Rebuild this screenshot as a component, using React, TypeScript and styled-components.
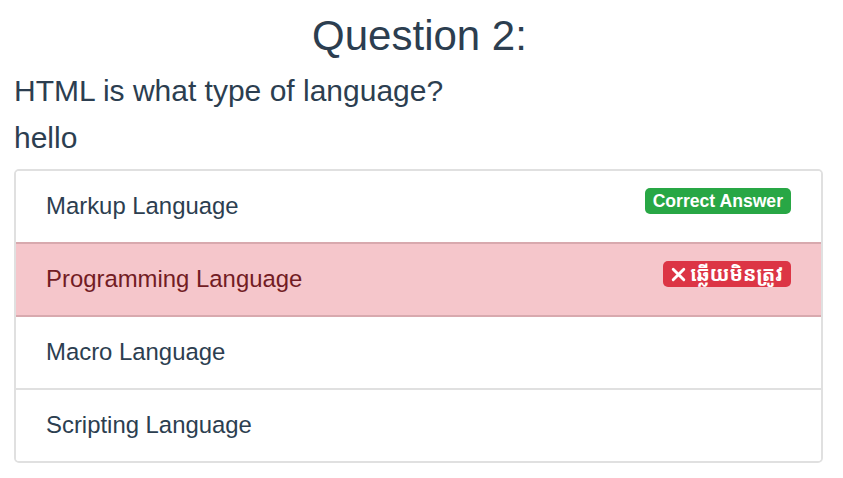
import React from "react";
import styled, { createGlobalStyle } from "styled-components";

const Global = createGlobalStyle`
  html, body { margin: 0; padding: 0; background: #ffffff; }
  body {
    font-family: "Liberation Sans", Arial, "Noto Sans", sans-serif;
    color: #2c3e50;
  }
`;

const Page = styled.div`
  width: 843px;
  box-sizing: border-box;
  padding: 10px 20px 0 14px;
  display: flex;
  flex-direction: column;
`;

const Title = styled.h1`
  margin: 0;
  font-weight: 400;
  font-size: 42px;
  line-height: 52px;
  text-align: center;
  padding-left: 2px;
`;

const Heading = styled.h3`
  margin: 0;
  font-weight: 400;
  font-size: 30px;
  line-height: 36px;
`;

const Question = styled(Heading)`
  margin-top: 11px;
`;

const Note = styled(Heading)`
  margin-top: 11px;
`;

const List = styled.ul`
  list-style: none;
  margin: 13px 0 0 0;
  padding: 0;
  border: 2px solid #e0e0e0;
  border-radius: 5px;
  overflow: hidden;
`;

const Item = styled.li<{ $variant?: "danger" }>`
  display: flex;
  align-items: flex-start;
  justify-content: space-between;
  padding: 16px 30px 17px 30px;
  font-size: 23.9px;
  line-height: 38px;
  color: ${(p) => (p.$variant === "danger" ? "#721c24" : "#2c3e50")};
  background: ${(p) => (p.$variant === "danger" ? "#f5c6cb" : "#ffffff")};
  border-top: 2px solid ${(p) => (p.$variant === "danger" ? "#d8a9ae" : "#e0e0e0")};
  margin: ${(p) => (p.$variant === "danger" ? "0 -2px" : "0")};
  border-left: ${(p) => (p.$variant === "danger" ? "2px solid #d8a9ae" : "none")};
  border-right: ${(p) => (p.$variant === "danger" ? "2px solid #d8a9ae" : "none")};
  &:first-child { border-top: none; }
`;

const DangerFollow = styled(Item)`
  border-top-color: #d8a9ae;
`;

const Badge = styled.span<{ $tone: "success" | "danger" }>`
  display: inline-flex;
  align-items: center;
  gap: 4px;
  height: 26px;
  padding: 0 8px;
  margin-top: 1px;
  border-radius: 5px;
  font-size: 17.6px;
  font-weight: 700;
  line-height: 26px;
  color: #ffffff;
  white-space: nowrap;
  background: ${(p) => (p.$tone === "success" ? "#28a745" : "#dc3545")};
`;

const KhmerText = styled.span`
  font-size: 19.8px;
  font-family: "Noto Sans Khmer", "Khmer OS", "Noto Sans", "Liberation Sans", sans-serif;
`;

const XIcon = () => (
  <svg width="15" height="15" viewBox="0 0 15 15" aria-hidden="true">
    <path d="M2.2 2.2 L12.8 12.8 M12.8 2.2 L2.2 12.8" stroke="#ffffff" strokeWidth="2.9" strokeLinecap="round" />
  </svg>
);

export default function App() {
  return (
    <>
      <Global />
      <Page>
        <Title>Question 2:</Title>
        <Question>HTML is what type of language?</Question>
        <Note>hello</Note>
        <List>
          <Item>
            <span>Markup Language</span>
            <Badge $tone="success">Correct Answer</Badge>
          </Item>
          <Item $variant="danger">
            <span>Programming Language</span>
            <Badge $tone="danger">
              <XIcon />
              <KhmerText>ឆ្លើយមិនត្រូវ</KhmerText>
            </Badge>
          </Item>
          <DangerFollow>
            <span>Macro Language</span>
          </DangerFollow>
          <Item>
            <span>Scripting Language</span>
          </Item>
        </List>
      </Page>
    </>
  );
}
